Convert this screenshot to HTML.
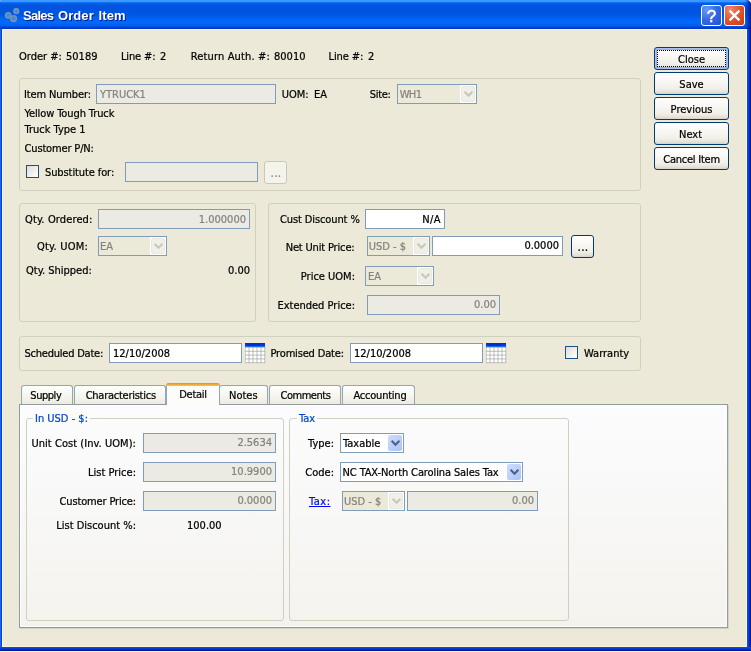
<!DOCTYPE html>
<html><head><meta charset="utf-8"><title>Sales Order Item</title>
<style>
html,body{margin:0;padding:0;}
body{width:751px;height:652px;position:relative;overflow:hidden;background:#f7f3dc;font-family:"DejaVu Sans Condensed","Liberation Sans",sans-serif;font-size:11px;color:#000;}
#win{will-change:transform;position:absolute;left:0;top:0;width:751px;height:651px;background:linear-gradient(90deg,#1a66ee 0,#1a66ee 1px,#0442e0 1px,#0442e0 2px,transparent 2px) ,#0831d9;border-radius:2px 5px 0 0;overflow:hidden;}
#title{position:absolute;left:0;top:0;width:751px;height:29px;background:linear-gradient(#3f97ff 0,#3d95ff 1.5px,#0a73f7 2.5px,#0160ea 3.5px,#0055e0 5px,#0055e0 14px,#0060f0 18px,#0068fb 21px,#0066f8 24px,#005ae9 26px,#0040d0 27.5px,#0034c4 29px);}
#ttext{position:absolute;left:23px;top:8px;font-family:"Liberation Sans",sans-serif;font-weight:bold;font-size:13px;color:#fff;text-shadow:1px 1px 0 #0a1883;white-space:nowrap;letter-spacing:0.1px;word-spacing:1px;}
#client{position:absolute;left:2px;top:29px;width:745px;height:618px;background:#ece9d8;box-sizing:border-box;border:1px solid #fdf5d6;border-top-color:#f9f2d8;}
#rb{position:absolute;left:747px;top:0;width:4px;height:651px;background:linear-gradient(90deg,#0a4ef0 0,#0838dc 50%,#001ea0 75%,#00138c 100%);}
#bb{position:absolute;left:0;top:647px;width:751px;height:4px;background:linear-gradient(#0a4ef0 0,#0838dc 40%,#001ea0 75%,#00138c 100%);}
.tb{position:absolute;top:5px;width:21px;height:21px;box-sizing:border-box;border:1px solid #fff;border-radius:3px;}
.t,.btn{-webkit-text-stroke:0.22px;}
.t{position:absolute;white-space:nowrap;line-height:13px;font-size:11px;height:13px;}
.g{color:#84837c;}
.r{width:200px;text-align:right;}
.gb{position:absolute;border:1px solid #d0d0bf;border-radius:3px;box-sizing:border-box;}
.in{position:absolute;box-sizing:border-box;border:1px solid #7f9db9;background:#fff;height:20px;}
.dis{background:#ebebe4;border-color:#7f9db9;}
.btn{position:absolute;box-sizing:border-box;width:75px;height:23px;border:1px solid #003c74;border-radius:3px;background:linear-gradient(#fff 0,#f8f7f2 40%,#f0efe8 75%,#e3e0d6 92%,#d6d0c5 100%);text-align:center;line-height:23px;white-space:nowrap;}
.btn.def{box-shadow:inset 0 0 0 1px #a9c1f3, inset 0 0 0 2px #8fb0ef;}
.btn.def:after{content:"";position:absolute;left:2px;top:2px;right:2px;bottom:2px;border:1px dotted #000;}
.cb{position:absolute;box-sizing:border-box;width:13px;height:13px;border:1px solid #1c5180;background:linear-gradient(135deg,#dcdcd7,#fff);}
.arr{position:absolute;top:0;right:0;width:16px;height:18px;background:#fff;}
.arr i{position:absolute;left:1px;top:1px;width:14px;height:16px;box-sizing:border-box;border-radius:2px;}
.arr svg{position:absolute;left:1px;top:1px;}
.arr.d i{background:#f0efe8;border:1px solid #eae9e0;}
.arr.e i{background:linear-gradient(135deg,#cfdcfd,#bdd0fb 50%,#aac2f8);}
.cmb{background:#ece9d8;}
.tab{position:absolute;box-sizing:border-box;top:385px;height:19px;border:1px solid #91a7b4;border-bottom:none;border-radius:3px 3px 0 0;background:linear-gradient(#fff,#f3f2ea 70%,#ecebe0);}
.tab.sel{top:383px;height:22px;background:#fcfcfa;border-top:none;z-index:3;}
.tab.sel:before{content:"";position:absolute;left:-1px;right:-1px;top:0;height:3px;background:linear-gradient(#e68b2c,#ffc73c);border-radius:3px 3px 0 0;}
#pane{position:absolute;left:19px;top:404px;width:709px;height:224px;box-sizing:border-box;border:1px solid #919b9c;background:linear-gradient(#fcfcfe,#f4f3ee);box-shadow:1px 1px 0 #d4d2c6, inset 1px -1px 0 #fdfdfc, inset -1px 0 0 #fdfdfc;}

</style></head><body>
<div id="win">
<div id="client"></div>
<div id="rb"></div><div id="bb"></div>
<div id="title"></div>
<div style="position:absolute;left:745px;top:0;width:6px;height:29px;background:linear-gradient(90deg,rgba(0,30,160,0),rgba(0,30,160,0.55) 50%,rgba(0,20,130,0.9))"></div>
<div id="ttext"><span style="letter-spacing:-0.75px">Sales</span> Order Item</div>
<svg style="position:absolute;left:4px;top:8px" width="17" height="17" viewBox="0 0 17 17"><g fill="#4a82ee" stroke="#6f96ad" stroke-width="1.6"><circle cx="4.2" cy="7.3" r="2.6"/><circle cx="12.3" cy="3.1" r="2.4"/><circle cx="9.5" cy="10.6" r="2.9"/></g></svg>
<div class="tb" style="left:701px;background:radial-gradient(circle at 25% 20%,#6b9af4,#3467e6 50%,#2050d2)"></div>
<div style="position:absolute;left:701px;top:5px;width:21px;height:21px;line-height:21px;text-align:center;color:#fff;font:17px/23.5px 'Liberation Sans',sans-serif;-webkit-text-stroke:0.5px #fff">?</div>
<div class="tb" style="left:724px;background:radial-gradient(circle at 28% 22%,#ee8a6c,#e1532e 50%,#c63a14)"></div>
<svg style="position:absolute;left:724px;top:5px" width="21" height="21" viewBox="0 0 21 21"><path d="M5.6 5.6L15.4 15.4M15.4 5.6L5.6 15.4" stroke="#fff" stroke-width="2.2" fill="none"/></svg>

<!-- row 1 -->
<div class="t" style="left:19px;top:50px">Order #:</div>
<div class="t" style="left:66px;top:50px">50189</div>
<div class="t" style="left:121px;top:50px;letter-spacing:-0.15px">Line #:</div>
<div class="t" style="left:160px;top:50px">2</div>
<div class="t" style="left:190.7px;top:50px;letter-spacing:0.15px">Return Auth. #:</div>
<div class="t" style="left:274px;top:50px">80010</div>
<div class="t" style="left:328.5px;top:50px;letter-spacing:-0.1px">Line #:</div>
<div class="t" style="left:368px;top:50px">2</div>

<!-- buttons -->
<div class="btn def" style="left:654px;top:47px">Close</div>
<div class="btn" style="left:654px;top:72px">Save</div>
<div class="btn" style="left:654px;top:97px">Previous</div>
<div class="btn" style="left:654px;top:122px;padding-right:2px">Next</div>
<div class="btn" style="left:654px;top:147px;letter-spacing:-0.24px">Cancel Item</div>

<!-- group 1 -->
<div class="gb" style="left:19px;top:78px;width:622px;height:113px"></div>
<div class="t" style="left:24px;top:88px;letter-spacing:-0.14px">Item Number:</div>
<div class="in dis" style="left:96px;top:84px;width:180px"></div>
<div class="t g" style="left:100px;top:88px">YTRUCK1</div>
<div class="t" style="left:281.7px;top:88px">UOM:</div>
<div class="t" style="left:314px;top:88px">EA</div>
<div class="t" style="left:369.8px;top:88px;letter-spacing:-0.35px">Site:</div>
<div class="in dis cmb" style="left:397px;top:84px;width:80px"><div class="arr d"><i></i><svg width="14" height="16" viewBox="0 0 14 16"><path d="M3.6 5.8L7.5 9.7L11.4 5.8" fill="none" stroke="#c9c7ba" stroke-width="2.1"/></svg></div></div>
<div class="t g" style="left:399.7px;top:88px;letter-spacing:-0.6px">WH1</div>
<div class="t" style="left:24.5px;top:107px;letter-spacing:-0.1px">Yellow Tough Truck</div>
<div class="t" style="left:24.5px;top:123px">Truck Type 1</div>
<div class="t" style="left:24.5px;top:142px;letter-spacing:-0.15px">Customer P/N:</div>
<div class="cb" style="left:26px;top:165px"></div>
<div class="t" style="left:45px;top:166px;letter-spacing:-0.1px">Substitute for:</div>
<div class="in dis" style="left:125px;top:162px;width:133px"></div>
<div class="btn" style="left:264px;top:161px;width:23px;border-color:#c9c7ba;background:#f5f4ea;color:#8f8d82;font-size:12px;letter-spacing:0.2px;padding-left:1px">...</div>

<!-- group 2 -->
<div class="gb" style="left:19px;top:203px;width:237px;height:119px"></div>
<div class="t" style="left:25px;top:213px;letter-spacing:0.13px">Qty. Ordered:</div>
<div class="in dis" style="left:98px;top:209px;width:152px"></div>
<div class="t g r" style="left:46px;top:213px">1.000000</div>
<div class="t" style="left:37px;top:240px;letter-spacing:0.2px">Qty. UOM:</div>
<div class="in dis cmb" style="left:98px;top:236px;width:69px"><div class="arr d"><i></i><svg width="14" height="16" viewBox="0 0 14 16"><path d="M3.6 5.8L7.5 9.7L11.4 5.8" fill="none" stroke="#c9c7ba" stroke-width="2.1"/></svg></div></div>
<div class="t g" style="left:100px;top:240px">EA</div>
<div class="t" style="left:26px;top:264px">Qty. Shipped:</div>
<div class="t r" style="left:50px;top:264px">0.00</div>

<!-- group 3 -->
<div class="gb" style="left:268px;top:203px;width:373px;height:119px"></div>
<div class="t" style="left:280px;top:213px;letter-spacing:-0.11px">Cust Discount %</div>
<div class="in" style="left:365px;top:209px;width:80px"></div>
<div class="t r" style="left:241px;top:213px;letter-spacing:0.4px">N/A</div>
<div class="t r" style="left:154.5px;top:241px;letter-spacing:-0.16px">Net Unit Price:</div>
<div class="in dis cmb" style="left:367px;top:236px;width:63px"><div class="arr d"><i></i><svg width="14" height="16" viewBox="0 0 14 16"><path d="M3.6 5.8L7.5 9.7L11.4 5.8" fill="none" stroke="#c9c7ba" stroke-width="2.1"/></svg></div></div>
<div class="t g" style="left:368.7px;top:240px">USD - $</div>
<div class="in" style="left:432px;top:236px;width:131px"></div>
<div class="t r" style="left:359px;top:239px">0.0000</div>
<div class="btn" style="left:571px;top:235px;width:23px;font-size:12px;letter-spacing:0.2px;padding-left:1px">...</div>
<div class="t r" style="left:155px;top:270px">Price UOM:</div>
<div class="in dis cmb" style="left:365px;top:266px;width:69px"><div class="arr d"><i></i><svg width="14" height="16" viewBox="0 0 14 16"><path d="M3.6 5.8L7.5 9.7L11.4 5.8" fill="none" stroke="#c9c7ba" stroke-width="2.1"/></svg></div></div>
<div class="t g" style="left:368px;top:270px">EA</div>
<div class="t r" style="left:155px;top:299px">Extended Price:</div>
<div class="in dis" style="left:367px;top:295px;width:133px"></div>
<div class="t g r" style="left:296px;top:298px">0.00</div>

<!-- group 4 -->
<div class="gb" style="left:19px;top:336px;width:622px;height:35px"></div>
<div class="t" style="left:24.5px;top:347px;letter-spacing:-0.22px">Scheduled Date:</div>
<div class="in" style="left:109px;top:343px;width:133px"></div>
<div class="t" style="left:113px;top:347px">12/10/2008</div>
<svg style="position:absolute;left:245px;top:343px" width="21" height="21" viewBox="0 0 21 21"><defs><linearGradient id="cg1" x1="0" y1="0" x2="0" y2="1"><stop offset="0" stop-color="#0a1ed8"/><stop offset="0.55" stop-color="#0c3ce0"/><stop offset="1" stop-color="#28a4e8"/></linearGradient></defs><rect x="0" y="4" width="20" height="16" fill="#fff"/><path d="M0 8.3H20M0 12.1H20M0 15.9H20M0 19.7H20M0.2 4V20M4 4V20M8 4V20M12 4V20M16 4V20M19.8 4V20" stroke="#8c8c8c" stroke-width="1" fill="none" opacity="0.55"/><rect x="0" y="0" width="20" height="4.5" fill="url(#cg1)"/><path d="M2.5 2.2H15" stroke="#0a1a90" stroke-width="1.2" opacity="0.6"/></svg>
<div class="t" style="left:270.5px;top:347px;letter-spacing:-0.17px">Promised Date:</div>
<div class="in" style="left:350px;top:343px;width:133px"></div>
<div class="t" style="left:354px;top:347px">12/10/2008</div>
<svg style="position:absolute;left:486px;top:343px" width="21" height="21" viewBox="0 0 21 21"><defs><linearGradient id="cg2" x1="0" y1="0" x2="0" y2="1"><stop offset="0" stop-color="#0a1ed8"/><stop offset="0.55" stop-color="#0c3ce0"/><stop offset="1" stop-color="#28a4e8"/></linearGradient></defs><rect x="0" y="4" width="20" height="16" fill="#fff"/><path d="M0 8.3H20M0 12.1H20M0 15.9H20M0 19.7H20M0.2 4V20M4 4V20M8 4V20M12 4V20M16 4V20M19.8 4V20" stroke="#8c8c8c" stroke-width="1" fill="none" opacity="0.55"/><rect x="0" y="0" width="20" height="4.5" fill="url(#cg2)"/><path d="M2.5 2.2H15" stroke="#0a1a90" stroke-width="1.2" opacity="0.6"/></svg>
<div class="cb" style="left:565px;top:346px"></div>
<div class="t" style="left:584px;top:347px">Warranty</div>

<!-- tabs -->
<div id="pane"></div>
<div class="tab" style="left:21px;width:52px"></div>
<div class="tab" style="left:74px;width:92px"></div>
<div class="tab sel" style="left:166px;width:54px"></div>
<div class="tab" style="left:219px;width:49px"></div>
<div class="tab" style="left:269px;width:72px"></div>
<div class="tab" style="left:342px;width:73px"></div>
<div class="t" style="left:30.3px;top:389px;z-index:4;letter-spacing:-0.45px">Supply</div>
<div class="t" style="left:85.7px;top:389px;z-index:4;letter-spacing:-0.26px">Characteristics</div>
<div class="t" style="left:179.3px;top:388px;z-index:4;letter-spacing:-0.3px">Detail</div>
<div class="t" style="left:229px;top:389px;z-index:4">Notes</div>
<div class="t" style="left:280.5px;top:389px;z-index:4;letter-spacing:-0.48px">Comments</div>
<div class="t" style="left:353.5px;top:389px;z-index:4;letter-spacing:-0.23px">Accounting</div>

<!-- In USD -->
<div class="gb" style="left:26px;top:418px;width:258px;height:203px"></div>
<div class="t" style="left:33px;top:412px;color:#0046d5;background:#fbfbf9;padding:0 2px">In USD - $:</div>
<div class="t r" style="left:-64px;top:437px;letter-spacing:0.05px">Unit Cost (Inv. UOM):</div>
<div class="in dis" style="left:143px;top:433px;width:133px"></div>
<div class="t g r" style="left:72px;top:436px">2.5634</div>
<div class="t r" style="left:-64px;top:466px">List Price:</div>
<div class="in dis" style="left:143px;top:462px;width:133px"></div>
<div class="t g r" style="left:72px;top:465px">10.9900</div>
<div class="t r" style="left:-64px;top:495px;letter-spacing:-0.15px">Customer Price:</div>
<div class="in dis" style="left:143px;top:491px;width:133px"></div>
<div class="t g r" style="left:72px;top:494px">0.0000</div>
<div class="t r" style="left:-64px;top:519px">List Discount %:</div>
<div class="t" style="left:187px;top:519px">100.00</div>

<!-- Tax -->
<div class="gb" style="left:289px;top:418px;width:280px;height:203px"></div>
<div class="t" style="left:297px;top:412px;color:#0046d5;background:#fbfbf9;padding:0 2px">Tax</div>
<div class="t r" style="left:134px;top:437px">Type:</div>
<div class="in" style="left:340px;top:433px;width:64px"><div class="arr e"><i></i><svg width="14" height="16" viewBox="0 0 14 16"><path d="M3.6 5.8L7.5 9.7L11.4 5.8" fill="none" stroke="#4d6185" stroke-width="2.1"/></svg></div></div>
<div class="t" style="left:343px;top:437px">Taxable</div>
<div class="t r" style="left:134px;top:466px">Code:</div>
<div class="in" style="left:340px;top:462px;width:183px"><div class="arr e"><i></i><svg width="14" height="16" viewBox="0 0 14 16"><path d="M3.6 5.8L7.5 9.7L11.4 5.8" fill="none" stroke="#4d6185" stroke-width="2.1"/></svg></div></div>
<div class="t" style="left:342.5px;top:466px;letter-spacing:-0.11px">NC TAX-North Carolina Sales Tax</div>
<div class="t" style="left:309px;top:495px;color:#0000ff;text-decoration:underline;letter-spacing:0.5px">Tax:</div>
<div class="in dis cmb" style="left:342px;top:491px;width:63px"><div class="arr d"><i></i><svg width="14" height="16" viewBox="0 0 14 16"><path d="M3.6 5.8L7.5 9.7L11.4 5.8" fill="none" stroke="#c9c7ba" stroke-width="2.1"/></svg></div></div>
<div class="t g" style="left:344px;top:495px">USD - $</div>
<div class="in dis" style="left:407px;top:491px;width:131px"></div>
<div class="t g r" style="left:334px;top:494px">0.00</div>
</div>

</body></html>
